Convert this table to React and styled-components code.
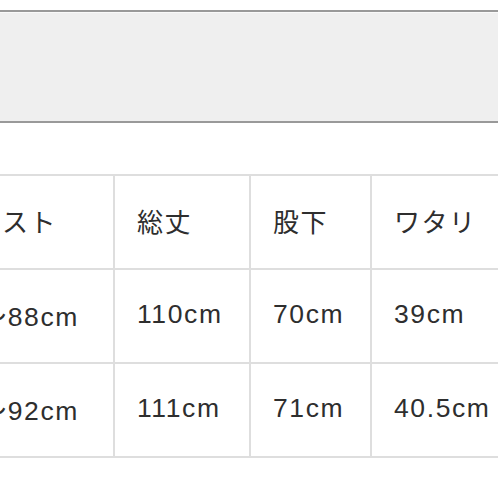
import React from "react";
import styled, { createGlobalStyle } from "styled-components";

const Global = createGlobalStyle`
  html, body { margin: 0; padding: 0; background: #fff; }
  body { font-family: "Liberation Sans", "Noto Sans CJK JP", sans-serif; overflow: hidden; }
`;

const Page = styled.div`
  width: 498px;
  height: 498px;
  overflow: hidden;
  padding-top: 10px;
  box-sizing: border-box;
`;

const Band = styled.div`
  height: 109px;
  background: #efefef;
  border-top: 2px solid #999;
  border-bottom: 2px solid #999;
  box-shadow: inset 0 1px 0 #f9f9f9;
`;

const Table = styled.table`
  margin-top: 51px;
  margin-left: -77px;
  border-collapse: collapse;
  table-layout: fixed;
  width: 647px;
  color: #2e2e2e;
`;

const Col = styled.col`
  width: ${(p) => p.$w}px;
`;

const Cell = styled.td`
  height: 88px;
  padding: 0 0 4px 22px;
  border: 2px solid #dedede;
  font-size: ${(p) => (p.$jp ? 26 : 26.5)}px;
  letter-spacing: ${(p) => (p.$jp ? 1.5 : 1.6)}px;
  white-space: nowrap;
  vertical-align: middle;
  font-family: ${(p) =>
    p.$jp
      ? `"Noto Sans CJK JP", sans-serif`
      : `"Liberation Sans", "Noto Sans CJK JP", sans-serif`};
  font-weight: 400;
`;

const widths = [190, 136, 121, 200];
const headers = ["ウエスト", "総丈", "股下", "ワタリ"];
const rows = [
  ["76〜88cm", "110cm", "70cm", "39cm"],
  ["80〜92cm", "111cm", "71cm", "40.5cm"],
];

export default function App() {
  return (
    <Page>
      <Global />
      <Band />
      <Table>
        <colgroup>
          {widths.map((w, i) => (
            <Col key={i} $w={w} />
          ))}
        </colgroup>
        <tbody>
          <tr>
            {headers.map((h) => (
              <Cell key={h} $jp>
                {h}
              </Cell>
            ))}
          </tr>
          {rows.map((r, i) => (
            <tr key={i}>
              {r.map((c, j) => (
                <Cell key={j}>{c}</Cell>
              ))}
            </tr>
          ))}
        </tbody>
      </Table>
    </Page>
  );
}
